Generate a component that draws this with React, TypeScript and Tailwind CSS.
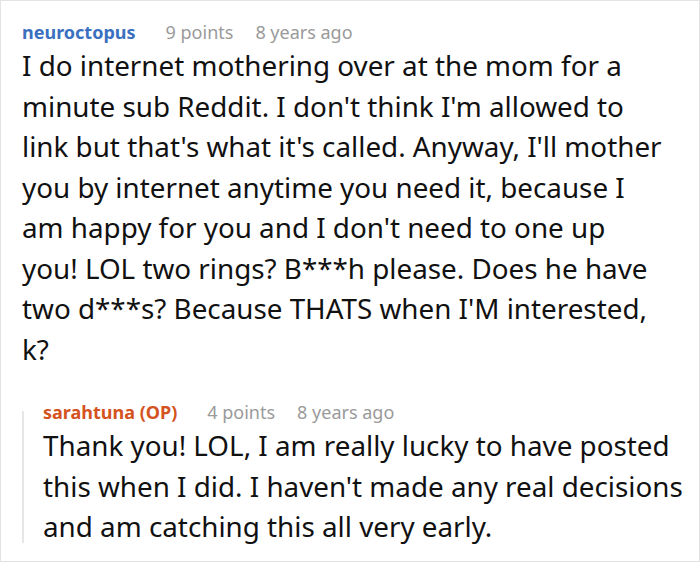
const font = { fontFamily: '"Noto Sans", "Open Sans", sans-serif' };

const Meta = ({ name, color, points, age }: { name: string; color: string; points: string; age: string }) => (
  <div className="flex items-baseline text-[18px] leading-[24px]">
    <span className={`font-bold ${color}`}>{name}</span>
    <span className="ml-[30px] text-[#9a9a9a]">{points}</span>
    <span className="ml-[22px] text-[#9a9a9a]">{age}</span>
  </div>
);

export default function App() {
  return (
    <div className="w-[700px] h-[562px] border border-[#e3e3e3] bg-white overflow-hidden" style={font}>
      <div className="pl-[21px] pr-[9px] pt-[19px]">
        <Meta name="neuroctopus" color="text-[#3b6fc0]" points="9 points" age="8 years ago" />
        <p className="mt-[1px] mr-[22px] text-[27.8px] leading-[40.5px] text-[#111]">
          I do internet mothering over at the mom for a minute sub Reddit. I don't think I'm allowed to link but that's
          what it's called. Anyway, I'll mother you by internet anytime you need it, because I am happy for you and I
          don't need to one up you! LOL two rings? B***h please. Does he have two d***s? Because THATS when I'M
          interested, k?
        </p>
        <div className="mt-[31px] flex">
          <div className="mt-[11px] mb-[4px] w-[2px] shrink-0 bg-[#e6e6e6]" />
          <div className="pl-[19px]">
            <Meta name="sarahtuna (OP)" color="text-[#d4531f]" points="4 points" age="8 years ago" />
            <p className="mt-[1px] text-[27.8px] leading-[40.5px] text-[#111]">
              Thank you! LOL, I am really lucky to have posted this when I did. I haven't made any real decisions and
              am catching this all very early.
            </p>
          </div>
        </div>
      </div>
    </div>
  );
}
